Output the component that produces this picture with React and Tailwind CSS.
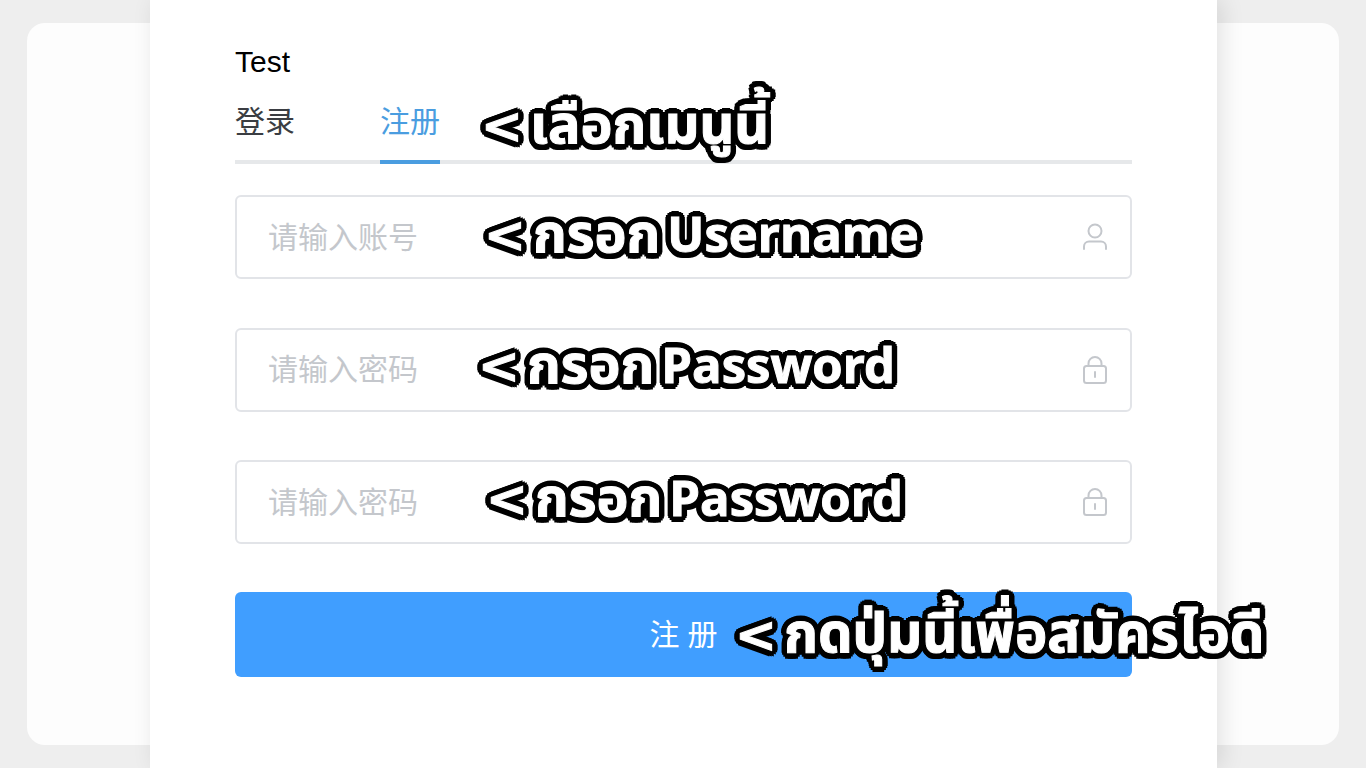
import React from "react";

const cjk = "font-['Liberation_Sans','Noto_Sans_CJK_SC',sans-serif]";

const UserIcon = () => (
  <svg width="26" height="28" viewBox="0 0 26 28" fill="none" stroke="#c4c7cc" strokeWidth="2" strokeLinecap="round">
    <circle cx="13" cy="8" r="6.500" />
    <path d="M2 26v-2.500a5 5 0 0 1 5-5h12a5 5 0 0 1 5 5V26" />
  </svg>
);

const LockIcon = () => (
  <svg width="26" height="30" viewBox="0 0 26 30" fill="none" stroke="#c4c7cc" strokeWidth="2" strokeLinecap="round">
    <rect x="2" y="11" width="22" height="17" rx="2.500" />
    <path d="M6.500 11V8.500a6.500 6.500 0 0 1 13 0V11" />
    <path d="M13 17v5" />
  </svg>
);

const Field = ({ placeholder, icon }) => (
  <div className="flex items-center h-[84px] pl-[31px] pr-[22px] bg-white border-2 border-[#e2e4e8] rounded-[6px]">
    <input
      placeholder={placeholder}
      className="flex-1 min-w-0 outline-none text-[30px] text-[#303133] placeholder:text-[#c4c7cc]"
    />
    {icon}
  </div>
);

// thai captions sit on top of the form, round black outline comes from the shadows
const Caption = ({ className, children }) => (
  <div
    className={`absolute flex items-baseline gap-[7px] whitespace-nowrap leading-none font-bold text-white [-webkit-text-stroke:1px_#fff] [text-shadow:6px_0_0_#000,5.500px_2.300px_0_#000,4.200px_4.200px_0_#000,2.300px_5.500px_0_#000,0_6px_0_#000,-2.300px_5.500px_0_#000,-4.200px_4.200px_0_#000,-5.500px_2.300px_0_#000,-6px_0_0_#000,-5.500px_-2.300px_0_#000,-4.200px_-4.200px_0_#000,-2.300px_-5.500px_0_#000,0_-6px_0_#000,2.300px_-5.500px_0_#000,4.200px_-4.200px_0_#000,5.500px_-2.300px_0_#000] font-['Noto_Sans_Thai','Noto_Sans','DejaVu_Sans',sans-serif] ${className}`}
  >
    <span className="text-[50px] font-['DejaVu_Sans',sans-serif]">&lt;</span>
    <span>{children}</span>
  </div>
);

const Latin = ({ children }) => <span className="text-[49px] -ml-[7px]">{children}</span>;

export default function App() {
  return (
    <div className={`relative h-screen overflow-hidden bg-[#eeeeee] pt-[23px] px-[27px] ${cjk}`}>
      <div className="h-[722px] rounded-[18px] bg-[#fdfdfd]" />

      <div className="absolute top-0 left-[150px] w-[1067px] h-[768px] bg-white px-[85px] pt-[43px] shadow-[5px_0_22px_rgba(0,0,0,0.11)]">
        <div className="text-[30px] leading-[38px] text-black">Test</div>

        <div className="flex gap-[85px] mt-[20px] border-b-4 border-[#e6e8ea] h-[63px] text-[30px]">
          <div className="w-[60px] h-[63px] leading-[42px] text-[#3a3d42]">登录</div>
          <div className="w-[60px] h-[63px] leading-[42px] text-[#4a9de0] border-b-4 border-[#4a9de0]">注册</div>
        </div>

        <div className="flex flex-col gap-[48.500px] mt-[31px]">
          <Field placeholder="请输入账号" icon={<UserIcon />} />
          <Field placeholder="请输入密码" icon={<LockIcon />} />
          <Field placeholder="请输入密码" icon={<LockIcon />} />
        </div>

        <button className="flex items-center justify-center w-full h-[85px] mt-[48px] rounded-[6px] bg-[#409eff] text-white text-[30px]">
          <span className="flex gap-[8px]"><span>注</span><span>册</span></span>
        </button>

        <Caption className="left-[331px] top-[100px] text-[54px]">เลือกเมนูนี้</Caption>
        <Caption className="left-[334px] top-[209px] text-[54px]">กรอก <Latin>Username</Latin></Caption>
        <Caption className="left-[328px] top-[340px] text-[54px]">กรอก <Latin>Password</Latin></Caption>
        <Caption className="left-[336px] top-[473px] text-[54px]">กรอก <Latin>Password</Latin></Caption>
        <Caption className="left-[585px] top-[609px] text-[54.500px]">กดปุ่มนี้เพื่อสมัครไอดี</Caption>
      </div>
    </div>
  );
}
